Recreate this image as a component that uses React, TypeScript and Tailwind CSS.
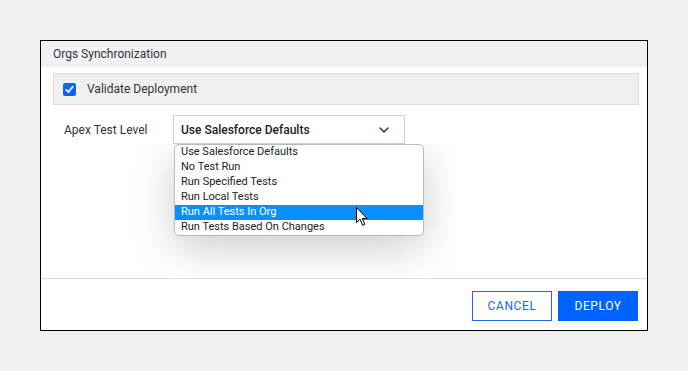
import { ChevronDown } from 'lucide-react'

const OPTIONS = [
  'Use Salesforce Defaults',
  'No Test Run',
  'Run Specified Tests',
  'Run Local Tests',
  'Run All Tests In Org',
  'Run Tests Based On Changes',
]

function Cursor() {
  return (
    <svg width="13" height="20" viewBox="0 0 13 20" className="absolute left-[181px] top-[62px]">
      <path
        d="M0.5 0.5 L0.5 15.5 L4 12.2 L6.6 18.3 L8.8 17.4 L6.3 11.5 L11 11.5 Z"
        fill="#fff"
        stroke="#000"
        strokeWidth="1"
        strokeLinejoin="round"
      />
    </svg>
  )
}

export default function App() {
  return (
    <div className="w-[688px] h-[371px] bg-[#f0f0f0] p-10 font-['Roboto',sans-serif]">
      <div className="h-[291px] border border-black bg-white flex flex-col">
        {/* Title */}
        <div className="h-[26px] bg-[#f0f1f3] px-3 flex items-center text-[12px] text-[#333]">
          Orgs Synchronization
        </div>

        {/* Body */}
        <div className="flex-1 pl-3 pt-[6px]">
          <div className="w-[586px] h-[32px] bg-[#f0f0f0] border border-[#dcdcdc] flex items-center pl-[9px] gap-[11px]">
            <span className="w-[13px] h-[13px] rounded-[2px] bg-[#0a64ff] flex items-center justify-center">
              <svg width="9" height="9" viewBox="0 0 9 9">
                <path d="M1.3 4.8 L3.5 7 L7.7 1.8" fill="none" stroke="#fff" strokeWidth="1.8" strokeLinecap="round" strokeLinejoin="round" />
              </svg>
            </span>
            <span className="text-[12px] text-[#333]">Validate Deployment</span>
          </div>

          <div className="mt-[10px] flex items-start">
            <span className="w-[120px] pl-[11px] h-[29px] flex items-center text-[12px] text-[#333]">Apex Test Level</span>
            <div className="relative">
              <div className="w-[232px] h-[29px] border border-[#cfcfcf] flex items-center justify-between pl-[7px] pr-[12px] text-[12px] font-medium text-[#1c1c28]">
                Use Salesforce Defaults
                <ChevronDown size={16} strokeWidth={2} className="text-[#1f2a44]" />
              </div>

              {/* popup window with its clipped shadow */}
              <div className="absolute left-[-43px] top-[29px] w-[325px] h-[129px] overflow-hidden">
                <div className="absolute left-[44px] top-0 w-[250px] rounded-[5px] border border-[#b9b9b9] bg-white overflow-hidden shadow-[0_12px_44px_rgba(0,0,0,0.2)]">
                  {OPTIONS.map((o, i) => (
                    <div
                      key={o}
                      className={
                        i === 4
                          ? 'h-[15px] pl-[6px] flex items-center text-[11px] bg-[#0a8fff] text-white'
                          : 'h-[15px] pl-[6px] flex items-center text-[11px] text-[#222]'
                      }
                    >
                      {o}
                    </div>
                  ))}
                  <Cursor />
                </div>
              </div>
            </div>
          </div>
        </div>

        {/* Footer */}
        <div className="h-[52px] border-t border-[#dcdcdc] flex items-start justify-end gap-[6px] pt-3 pr-[9px]">
          <button className="w-[80px] h-[30px] border border-[#1a66ff] text-[#1a66ff] text-[12px] tracking-[0.6px]">
            CANCEL
          </button>
          <button className="w-[80px] h-[30px] bg-[#0062ff] text-white text-[12px] tracking-[0.6px]">
            DEPLOY
          </button>
        </div>
      </div>
    </div>
  )
}
